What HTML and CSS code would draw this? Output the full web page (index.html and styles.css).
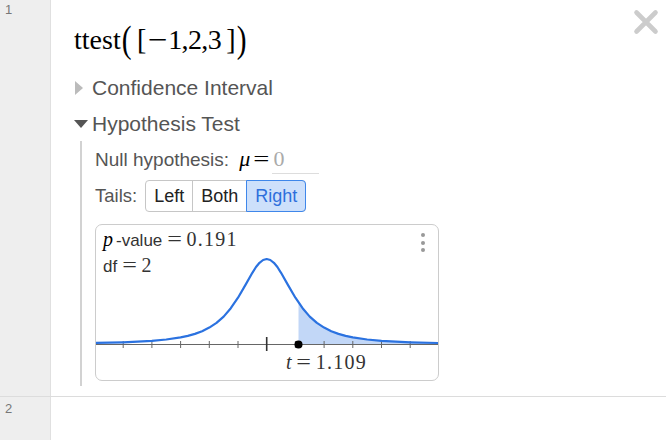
FILE: index.html
```html
<!DOCTYPE html>
<html>
<head>
<meta charset="utf-8">
<link rel="stylesheet" href="styles.css">
</head>
<body>
<div class="list">
  <div class="row row1">
    <div class="gutter">1</div>
    <div class="content">
      <svg class="close" width="26" height="26" viewBox="0 0 26 26"><path d="M3.5 3.5 L22.5 22.5 M22.5 3.5 L3.5 22.5" stroke="#cccccc" stroke-width="4.6" stroke-linecap="round" fill="none"/></svg>
      <div class="title"><span class="fn">ttest</span><span class="paren">(</span><span class="brk lb">[</span><span class="minus">−</span><span class="nums">1,2,3</span><span class="brk rb">]</span><span class="paren">)</span></div>
      <div class="section"><span class="tri"><span class="tri-right"></span></span><span class="sec-label">Confidence Interval</span></div>
      <div class="section open"><span class="tri"><span class="tri-down"></span></span><span class="sec-label">Hypothesis Test</span></div>
      <div class="hbody">
        <div class="null"><span>Null hypothesis:</span><span class="math"><span class="mu">μ</span><span class="eq">=</span></span><span class="input">0</span></div>
        <div class="tails"><span class="tails-label">Tails:</span>
          <div class="seg"><span class="btn">Left</span><span class="btn">Both</span><span class="btn sel">Right</span></div>
        </div>
        <div class="graph">
          <svg class="plot" width="342" height="155" viewBox="0 0 342 155">
            <polygon class="shade" points="202.5,119 202.5,77.6 206.6,83.2 213.75,91.6 220.9,97.9 228.1,102.6 235.3,106.2 242.45,108.9 249.6,110.9 256.8,112.4 271.15,114.5 285.5,115.9 299.85,116.7 314.2,117.3 342.9,118 342.9,119"/>
            <line class="axis" x1="0" y1="119.5" x2="342" y2="119.5"/>
            <g class="ticks">
              <line x1="27.2" y1="116" x2="27.2" y2="123"/>
              <line x1="55.9" y1="116" x2="55.9" y2="123"/>
              <line x1="84.6" y1="116" x2="84.6" y2="123"/>
              <line x1="113.3" y1="116" x2="113.3" y2="123"/>
              <line x1="142" y1="116" x2="142" y2="123"/>
              <line x1="199.4" y1="116" x2="199.4" y2="123"/>
              <line x1="228.1" y1="116" x2="228.1" y2="123"/>
              <line x1="256.8" y1="116" x2="256.8" y2="123"/>
              <line x1="285.5" y1="116" x2="285.5" y2="123"/>
              <line x1="314.2" y1="116" x2="314.2" y2="123"/>
              <line class="major" x1="170.7" y1="112" x2="170.7" y2="126"/>
            </g>
            <polyline class="curve" points="-1.5,118 27.2,117.3 41.55,116.7 55.9,115.9 70.25,114.5 84.6,112.4 91.8,110.9 98.95,108.9 106.1,106.2 113.3,102.6 120.5,97.9 127.65,91.6 134.8,83.2 142,72.7 149.2,60.4 156.35,47.8 160,42 163.5,37.8 167.1,35 170.7,34 174.3,35 177.9,37.8 181.4,42 185.05,47.8 192.2,60.4 199.4,72.7 206.6,83.2 213.75,91.6 220.9,97.9 228.1,102.6 235.3,106.2 242.45,108.9 249.6,110.9 256.8,112.4 271.15,114.5 285.5,115.9 299.85,116.7 314.2,117.3 342.9,118"/>
            <circle cx="202.5" cy="119.5" r="4" fill="#000"/>
          </svg>
          <div class="labels">
            <div class="lbl"><span class="mi">p</span><span class="txt">-value</span><span class="meq">=</span><span class="mn">0.191</span></div>
            <div class="lbl"><span class="txt df">df</span><span class="meq">=</span><span class="mn">2</span></div>
          </div>
          <div class="menu"><span class="dot"></span><span class="dot"></span><span class="dot"></span></div>
          <div class="tlabel"><span class="mi">t</span><span class="meq">=</span><span class="mn">1.109</span></div>
        </div>
      </div>
    </div>
  </div>
  <div class="row row2">
    <div class="gutter">2</div>
    <div class="content2"></div>
  </div>
</div>
</body>
</html>
```

FILE: styles.css
```css
* { box-sizing: border-box; }
html, body { margin: 0; padding: 0; background: #fff; }
body { font-family: "Liberation Sans", Arial, sans-serif; width: 666px; height: 440px; overflow: hidden; }

.row { display: flex; border-bottom: 1px solid #dcdcdc; }
.row2 { height: 44px; border-bottom: none; }
.gutter {
  width: 51px; flex: none; background: #eeeeee; border-right: 1px solid #e0e0e0;
  color: #777; font-size: 13px; line-height: 14px; padding: 3px 0 0 5px;
}
.row2 .gutter { padding-top: 5px; }
.content { flex: 1; position: relative; padding: 14px 0 10px 23px; }
.content2 { flex: 1; }

.close { position: absolute; top: 9px; right: 7px; }

.title { font-family: "Liberation Serif", "Times New Roman", serif; font-size: 28px; line-height: 51px; height: 51px; margin-bottom: 4px; color: #000; white-space: nowrap; }
.paren { display: inline-block; transform: scale(1.05, 1.32); margin: 0 1px; }
.brk { display: inline-block; transform: scaleY(1.05); }
.lb { margin-left: 5px; }
.rb { margin-left: 5px; margin-right: 1px; }
.minus { display: inline-block; transform: scaleX(1.25); margin: 0 2px 0 4px; }
.nums { letter-spacing: -0.6px; }

.section { display: flex; align-items: center; height: 37px; font-size: 21px; color: #555; }
.section.open { height: 34px; margin-top: 1px; }
.tri { width: 18px; flex: none; display: flex; align-items: center; }
.tri-right { width: 0; height: 0; margin-left: 1px; border-left: 8px solid #bbbbbb; border-top: 7.5px solid transparent; border-bottom: 7.5px solid transparent; }
.tri-down { width: 0; height: 0; border-top: 8px solid #555; border-left: 7px solid transparent; border-right: 7px solid transparent; }

.hbody { margin-left: 6px; border-left: 2px solid #d2d2d2; padding: 3px 0 5px 13px; }

.null { display: flex; align-items: baseline; height: 30px; line-height: 30px; font-size: 19px; color: #555; }
.math { font-family: "Liberation Serif", serif; font-size: 22px; color: #000; margin-left: 10px; }
.mu { font-style: italic; }
.eq { display: inline-block; margin: 0 3px 0 5px; transform: scaleX(1.3); }
.input { display: inline-block; width: 47px; height: 30px; line-height: 30px; border-bottom: 1px solid #dddddd; font-family: "Liberation Serif", serif; font-size: 22px; color: #aaa; padding-left: 2px; margin-left: 1px; }

.tails { display: flex; align-items: center; height: 32px; margin-top: 6px; font-size: 18px; }
.tails-label { color: #555; margin-right: 8px; font-size: 18.5px; }
.seg { display: flex; height: 32px; border: 1px solid #c6c6c6; border-radius: 4px; }
.btn { line-height: 30px; padding: 0 8px; color: #222; }
.btn + .btn { border-left: 1px solid #c6c6c6; }
.btn.sel { background: #cde0fb; color: #2d6fdc; border: 1px solid #3f87ea; margin: -1px -1px -1px 0; line-height: 30px; border-radius: 0 4px 4px 0; padding: 0 8px 0 8px; }

.graph { position: relative; margin-top: 12px; width: 344px; height: 157px; border: 1px solid #cccccc; border-radius: 7px; overflow: hidden; }
.plot { position: absolute; left: 0; top: 0; }
.shade { fill: #c2d7f7; }
.axis { stroke: #666; stroke-width: 1.2; }
.ticks line { stroke: #666; stroke-width: 1; }
.ticks line.major { stroke: #333; stroke-width: 1.6; }
.curve { fill: none; stroke: #2b72e0; stroke-width: 2.2; stroke-linejoin: round; stroke-linecap: round; }

.labels { position: relative; padding: 2px 0 0 7px; font-size: 17px; line-height: 25px; color: #333; }
.lbl { white-space: nowrap; }
.mi { font-family: "Liberation Serif", serif; font-style: italic; font-size: 20px; color: #000; }
.mn { font-family: "Liberation Serif", serif; font-size: 20px; color: #333; letter-spacing: 1.2px; }
.meq { font-family: "Liberation Serif", serif; font-size: 20px; display: inline-block; margin: 0 6px 0 7px; transform: scaleX(1.3); color: #333; }
.txt { margin-left: 3px; }
.txt.df { margin-left: 0; }

.menu { position: absolute; top: 8px; right: 13px; display: flex; flex-direction: column; gap: 3.5px; }
.dot { width: 4px; height: 4px; border-radius: 50%; background: #999; }

.tlabel { position: absolute; left: 190px; top: 127px; line-height: 20px; white-space: nowrap; color: #333; }
.tlabel .mi { color: #333; }
.tlabel .meq { margin: 0 7px 0 6px; }
```
